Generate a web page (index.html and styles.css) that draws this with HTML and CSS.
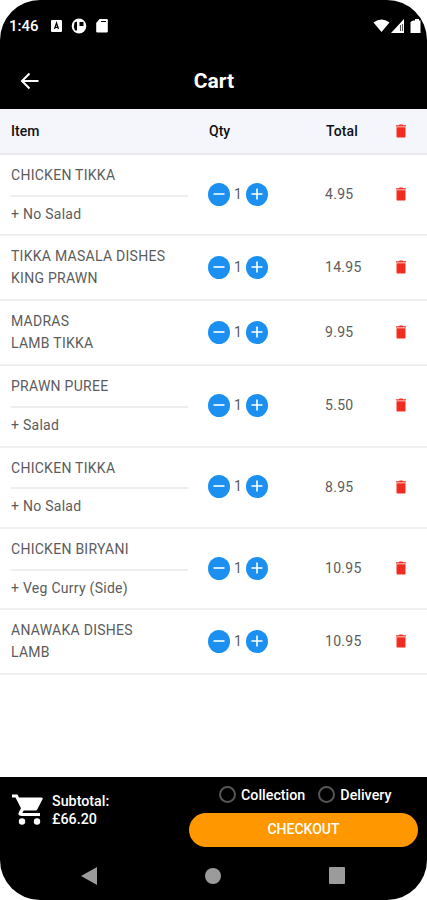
FILE: index.html
```html
<!DOCTYPE html>
<html lang="en">
<head>
<meta charset="utf-8">
<title>Cart</title>
<link rel="stylesheet" href="styles.css">
</head>
<body>
<svg class="defs" width="0" height="0">
  <symbol id="trash" viewBox="0 0 11 14"><path d="M.5 1.200h3L4 .4h3l.5.8h3v1.300H.5zM1 3.300h9v9.100q0 1.200-1.200 1.200H2.200Q1 13.600 1 12.400z"/><path d="M4 5v7M7 5v7" stroke="#c92a1c" stroke-width=".6" opacity=".6"/></symbol>
  <symbol id="minus" viewBox="0 0 22 23"><ellipse cx="11" cy="11.500" rx="11" ry="11.500"/><path d="M5.500 11h11" stroke="#fff" stroke-width="1.600"/></symbol>
  <symbol id="plus" viewBox="0 0 22 23"><ellipse cx="11" cy="11.500" rx="11" ry="11.500"/><path d="M5.500 11h11M11 5.500v11" stroke="#fff" stroke-width="1.600"/></symbol>
</svg>
<div class="phone">
  <div class="status">
    <span class="time">1:46</span>
    <svg class="s-left" width="60" height="16" viewBox="0 0 60 16"><g fill="#fff"><rect x="1" y="2" width="11" height="12" rx="1"/><ellipse cx="29" cy="8" rx="7.300" ry="7.500"/><path d="M49.500 1h7q1.300 0 1.300 1.300v11q0 1.300-1.300 1.300h-9q-1.300 0-1.300-1.300V5z"/></g><path d="M4.500 11 6.500 5l2 6M5 9.300h3" fill="none" stroke="#000" stroke-width="1.200"/><path d="M24.500 4.500q-1.500 4 .5 8h2V3.500z"/><path d="M29.500 4h4v4h-4z"/><path d="M51 3.500h5" stroke="#000" stroke-width="1.200"/></svg>
    <svg class="s-right" width="48" height="16" viewBox="0 0 48 16"><path d="M.5 4.500Q8.500-1.500 16.500 4.500L8.500 14zM18 15 31 1v14zM40 2.500h2V1h4v1.500h1.500V15H37.500V4z" fill="#fff"/><path d="M27.500 7v6M29.500 6v7" stroke="#555" stroke-width="1"/></svg>
  </div>
  <header class="bar">
    <svg class="back" width="20" height="18" viewBox="0 0 20 18"><path d="M18.500 9H2M9.500 1.500 2 9l7.500 7.500" fill="none" stroke="#fff" stroke-width="2"/></svg>
    <h1>Cart</h1>
  </header>
  <main class="cart">
    <div class="row head"><span class="item">Item</span><span class="qty">Qty</span><span class="total">Total</span><svg class="trash"><use href="#trash"/></svg></div>
    <div class="row tall"><div class="item"><p>CHICKEN TIKKA</p><p class="extra">+ No Salad</p></div><div class="qty"><svg><use href="#minus"/></svg><span>1</span><svg><use href="#plus"/></svg></div><span class="total">4.95</span><svg class="trash"><use href="#trash"/></svg></div>
    <div class="row"><div class="item"><p>TIKKA MASALA DISHES</p><p>KING PRAWN</p></div><div class="qty"><svg><use href="#minus"/></svg><span>1</span><svg><use href="#plus"/></svg></div><span class="total">14.95</span><svg class="trash"><use href="#trash"/></svg></div>
    <div class="row"><div class="item"><p>MADRAS</p><p>LAMB TIKKA</p></div><div class="qty"><svg><use href="#minus"/></svg><span>1</span><svg><use href="#plus"/></svg></div><span class="total">9.95</span><svg class="trash"><use href="#trash"/></svg></div>
    <div class="row tall"><div class="item"><p>PRAWN PUREE</p><p class="extra">+ Salad</p></div><div class="qty"><svg><use href="#minus"/></svg><span>1</span><svg><use href="#plus"/></svg></div><span class="total">5.50</span><svg class="trash"><use href="#trash"/></svg></div>
    <div class="row tall"><div class="item"><p>CHICKEN TIKKA</p><p class="extra">+ No Salad</p></div><div class="qty"><svg><use href="#minus"/></svg><span>1</span><svg><use href="#plus"/></svg></div><span class="total">8.95</span><svg class="trash"><use href="#trash"/></svg></div>
    <div class="row tall"><div class="item"><p>CHICKEN BIRYANI</p><p class="extra">+ Veg Curry (Side)</p></div><div class="qty"><svg><use href="#minus"/></svg><span>1</span><svg><use href="#plus"/></svg></div><span class="total">10.95</span><svg class="trash"><use href="#trash"/></svg></div>
    <div class="row"><div class="item"><p>ANAWAKA DISHES</p><p>LAMB</p></div><div class="qty"><svg><use href="#minus"/></svg><span>1</span><svg><use href="#plus"/></svg></div><span class="total">10.95</span><svg class="trash"><use href="#trash"/></svg></div>
  </main>
  <footer class="foot">
    <div class="summary">
      <svg class="basket" width="32" height="32" viewBox="0 0 32 32"><path d="M0 1.500h5.500L7 4.500h22.500q2 0 1 1.800L25.500 16q-.7 1.500-2.300 1.500H11.700L10.300 20H28v3H9.500q-4.500-.5-2.500-4l2-3.700L3.500 4.500H0z" fill="#fff"/><circle cx="10" cy="28.500" r="3.200" fill="#fff"/><circle cx="25" cy="28.500" r="3.200" fill="#fff"/></svg>
      <div class="sub"><div>Subtotal:</div><div>£66.20</div></div>
      <div class="order">
        <div class="choices"><label><i></i>Collection</label><label><i></i>Delivery</label></div>
        <button>CHECKOUT</button>
      </div>
    </div>
    <nav><svg width="16" height="18"><path d="M0 9 16 0v18z"/></svg><svg width="16" height="16"><circle cx="8" cy="8" r="8"/></svg><svg width="16" height="17"><rect width="16" height="17" rx="1"/></svg></nav>
  </footer>
</div>
</body>
</html>
```
FILE: styles.css
```css
* { box-sizing: border-box; margin: 0; }
body { background: #fff; font-family: Roboto, sans-serif; }
.defs { position: absolute; }
.phone { width: 427px; height: 900px; display: flex; flex-direction: column; border-radius: 40px; overflow: hidden; background: #fff; }
.status { height: 53px; background: #000; color: #fff; display: flex; align-items: center; padding: 0 6px 1px 9px; }
.time { font-size: 15px; font-weight: 500; width: 41px; }
.s-right { margin-left: auto; }
.bar { height: 56px; background: #000; color: #fff; display: grid; grid-template-columns: 60px 1fr 60px; align-items: center; }
.back { margin: -1px 0 0 20px; }
h1 { font-size: 21px; font-weight: 700; text-align: center; padding-left: 1px; }
.cart { flex: 1; }
.row { height: 65px; border-bottom: 2px solid #f0f0f0; display: grid; grid-template-columns: 197px 117px 70px 12px; align-items: center; padding-left: 11px; font-size: 14px; color: #5c5c5c; }
.tall { height: 81.300px; }
.head { height: 46px; background: #f4f6fb; border-color: #e9ebef; color: #111; font-weight: 500; }
.item p { line-height: 21.500px; letter-spacing: .27px; white-space: nowrap; }
.item .extra { border-top: 2px solid #eee; width: 177px; margin-top: 8px; padding-top: 7px; }
.tall .item { padding-top: 1px; }
.qty { display: flex; align-items: center; }
.qty svg { width: 22px; height: 23px; fill: #1b90f0; }
.qty span { width: 16px; text-align: center; padding-bottom: 1px; }
.total { letter-spacing: .3px; margin-top: -1px; }
.head .qty { padding-left: 1px; }
.head .qty, .head .item { margin-top: -1px; }
.head .total { letter-spacing: .1px; padding-left: 1px; }
.trash { width: 12px; height: 14px; fill: #f52d20; }
.row:not(.head) .trash { margin-top: -1px; }
.row:not(.head) .qty { margin-top: -1px; }
.foot { height: 123px; background: #000; color: #fff; }
.summary { height: 75px; display: flex; padding: 7px 9px 0 12px; }
.basket { margin-top: 9px; }
.sub { font-size: 14.300px; font-weight: 500; line-height: 18px; padding: 8px 0 0 8px; width: 145px; }
.order { width: 229px; }
.choices { display: flex; gap: 13px; padding-left: 30px; height: 21px; font-size: 14.300px; font-weight: 500; }
label { display: flex; align-items: center; gap: 5px; }
label i { width: 17px; height: 17px; border: 2px solid #555; border-radius: 50%; }
button { margin-top: 8px; width: 229px; height: 34px; border: 0; border-radius: 17px; background: #ff9800; color: #fff; font: 500 14px Roboto, sans-serif; padding-bottom: 3px; }
nav { height: 47px; padding: 0 82px 0 81px; display: flex; justify-content: space-between; align-items: center; fill: #9b9b9b; }
```
